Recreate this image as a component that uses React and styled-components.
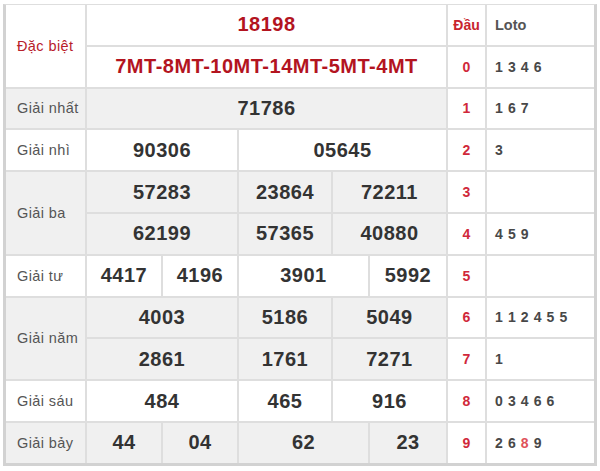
import styled, { createGlobalStyle } from 'styled-components';

const GlobalStyle = createGlobalStyle`
  html, body {
    margin: 0;
    padding: 0;
    background: #ffffff;
    font-family: "Liberation Sans", Arial, sans-serif;
  }
`;

// outer frame with the heavier grey edge
const Frame = styled.div`
  margin: 4px 0 0 3px;
  width: 588px;
  border-left: 3px solid #d2d2d2;
  border-right: 3px solid #d2d2d2;
  border-bottom: 3px solid #d2d2d2;
  border-top: 1px solid #dedede;
`;

// 8 tracks: label | 5 result tracks | đầu | loto
const Board = styled.div`
  display: grid;
  grid-template-columns: 79px 74px 74px 92px 35px 76px 37px 107px;
  grid-template-rows: repeat(11, 39.8px);
  gap: 2px;
  background: #dedede;
`;

const Cell = styled.div`
  display: flex;
  align-items: center;
  justify-content: center;
  background: ${({ $shade }) => ($shade ? '#f0f0f0' : '#ffffff')};
  grid-column: span ${({ $cols }) => $cols || 1};
  grid-row: span ${({ $rows }) => $rows || 1};
`;

const LabelCell = styled(Cell)`
  justify-content: flex-start;
  padding-left: 11px;
  font-size: 14.5px;
  letter-spacing: 0.4px;
  color: ${({ $red }) => ($red ? '#b8202a' : '#555555')};
`;

const Number = styled(Cell)`
  font-size: 20px;
  font-weight: bold;
  letter-spacing: 0.5px;
  color: ${({ $red }) => ($red ? '#b3141f' : '#333333')};
`;

const HeadCell = styled(Cell)`
  font-size: 14px;
  font-weight: bold;
  color: #c8242d;
`;

const LotoHead = styled(Cell)`
  justify-content: flex-start;
  padding-left: 8px;
  font-size: 14.5px;
  font-weight: bold;
  color: #555555;
`;

const DauCell = styled(Cell)`
  font-size: 14px;
  font-weight: bold;
  color: #d0283a;
`;

const LotoCell = styled(Cell)`
  justify-content: flex-start;
  padding-left: 8px;
  font-size: 14px;
  font-weight: bold;
  letter-spacing: 0.6px;
  color: #484848;
  white-space: pre;
`;

const Hit = styled.span`
  color: #e0525a;
`;

const loto = [
  '1 3 4 6',
  '1 6 7',
  '3',
  '',
  '4 5 9',
  '',
  '1 1 2 4 5 5',
  '1',
  '0 3 4 6 6',
  null,
];

function Side({ index }) {
  const value = loto[index];
  return (
    <>
      <DauCell>{index}</DauCell>
      <LotoCell>
        {value === null ? (
          <>2 6 <Hit>8</Hit> 9</>
        ) : (
          value
        )}
      </LotoCell>
    </>
  );
}

export default function App() {
  return (
    <>
      <GlobalStyle />
      <Frame>
        <Board>
          {/* đặc biệt */}
          <LabelCell $rows={2} $red>Đặc biệt</LabelCell>
          <Number $cols={5} $red>18198</Number>
          <HeadCell>Đầu</HeadCell>
          <LotoHead>Loto</LotoHead>
          <Number $cols={5} $red>7MT-8MT-10MT-14MT-5MT-4MT</Number>
          <Side index={0} />

          {/* nhất */}
          <LabelCell $shade>Giải nhất</LabelCell>
          <Number $cols={5} $shade>71786</Number>
          <Side index={1} />

          {/* nhì */}
          <LabelCell>Giải nhì</LabelCell>
          <Number $cols={2}>90306</Number>
          <Number $cols={3}>05645</Number>
          <Side index={2} />

          {/* ba */}
          <LabelCell $rows={2} $shade>Giải ba</LabelCell>
          <Number $cols={2} $shade>57283</Number>
          <Number $shade>23864</Number>
          <Number $cols={2} $shade>72211</Number>
          <Side index={3} />
          <Number $cols={2} $shade>62199</Number>
          <Number $shade>57365</Number>
          <Number $cols={2} $shade>40880</Number>
          <Side index={4} />

          {/* tư */}
          <LabelCell>Giải tư</LabelCell>
          <Number>4417</Number>
          <Number>4196</Number>
          <Number $cols={2}>3901</Number>
          <Number>5992</Number>
          <Side index={5} />

          {/* năm */}
          <LabelCell $rows={2} $shade>Giải năm</LabelCell>
          <Number $cols={2} $shade>4003</Number>
          <Number $shade>5186</Number>
          <Number $cols={2} $shade>5049</Number>
          <Side index={6} />
          <Number $cols={2} $shade>2861</Number>
          <Number $shade>1761</Number>
          <Number $cols={2} $shade>7271</Number>
          <Side index={7} />

          {/* sáu */}
          <LabelCell>Giải sáu</LabelCell>
          <Number $cols={2}>484</Number>
          <Number>465</Number>
          <Number $cols={2}>916</Number>
          <Side index={8} />

          {/* bảy */}
          <LabelCell $shade>Giải bảy</LabelCell>
          <Number $shade>44</Number>
          <Number $shade>04</Number>
          <Number $cols={2} $shade>62</Number>
          <Number $shade>23</Number>
          <Side index={9} />
        </Board>
      </Frame>
    </>
  );
}
